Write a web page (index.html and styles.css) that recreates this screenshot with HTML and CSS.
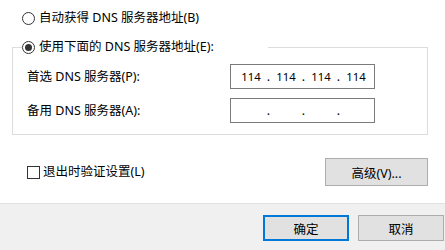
FILE: index.html
```html
<!DOCTYPE html>
<html lang="zh-CN">
<head>
<meta charset="utf-8">
<title>DNS</title>
<link rel="stylesheet" href="styles.css">
</head>
<body>
<div class="dialog">
  <div class="content">
    <div class="option">
      <span class="radio"></span>
      <span class="opt-text">自动获得 DNS 服务器地址(B)</span>
    </div>
    <fieldset class="group">
      <legend class="legend">
        <span class="radio checked"></span>
        <span class="opt-text">使用下面的 DNS 服务器地址(E):</span>
      </legend>
      <div class="fields">
        <span class="label">首选 DNS 服务器(P):</span>
        <div class="ip">
          <span class="seg">114</span><span class="dot">.</span><span class="seg">114</span><span class="dot">.</span><span class="seg">114</span><span class="dot">.</span><span class="seg">114</span>
        </div>
        <span class="label">备用 DNS 服务器(A):</span>
        <div class="ip">
          <span class="seg"></span><span class="dot">.</span><span class="seg"></span><span class="dot">.</span><span class="seg"></span><span class="dot">.</span><span class="seg"></span>
        </div>
      </div>
    </fieldset>
    <div class="bottom-row">
      <div class="check-wrap">
        <span class="checkbox"></span>
        <span class="opt-text">退出时验证设置(L)</span>
      </div>
      <button class="btn adv">高级(V)...</button>
    </div>
  </div>
  <div class="footer">
    <button class="btn ok">确定</button>
    <button class="btn">取消</button>
  </div>
</div>
</body>
</html>
```
FILE: styles.css
```css
html, body {
  margin: 0;
  padding: 0;
  background: #ffffff;
}
body {
  font-family: "Noto Sans", "Noto Sans CJK SC", sans-serif;
  font-size: 12.5px;
  color: #000;
  width: 445px;
  height: 250px;
  overflow: hidden;
}
.dialog {
  display: flex;
  flex-direction: column;
  height: 250px;
}
.content {
  height: 203px;
  box-sizing: border-box;
  padding: 10px 0 0 12px;
}
.option {
  display: flex;
  align-items: center;
  height: 16px;
  margin-left: 10px;
}
.radio {
  width: 13px;
  height: 13px;
  box-sizing: border-box;
  border: 1px solid #333;
  border-radius: 50%;
  background: #fff;
  display: inline-flex;
  align-items: center;
  justify-content: center;
  flex: none;
}
.radio.checked::after {
  content: "";
  width: 7px;
  height: 7px;
  border-radius: 50%;
  background: #333;
}
.opt-text {
  margin-left: 4px;
  line-height: 16px;
  white-space: nowrap;
}
.group {
  margin: 13px 0 0 0;
  width: 416px;
  box-sizing: border-box;
  border: 1px solid #dcdcdc;
  padding: 0;
  min-width: 0;
}
.legend {
  display: flex;
  align-items: center;
  height: 16px;
  width: 246px;
  padding: 0;
  margin-left: 9px;
  background: #fff;
}
.fields {
  display: grid;
  grid-template-columns: 203px 145px;
  grid-auto-rows: 25px;
  row-gap: 9px;
  align-items: center;
  padding: 9px 0 11px 14px;
}
.label {
  white-space: nowrap;
  line-height: 16px;
}
.ip {
  height: 25px;
  box-sizing: border-box;
  border: 1px solid #7a7a7a;
  display: flex;
  align-items: center;
  padding: 0 0 0 9px;
}
.seg {
  flex: none;
  width: 22px;
  text-align: center;
  font-size: 11.3px;
}
.dot {
  flex: none;
  width: 13px;
  text-align: center;
}
.bottom-row {
  display: flex;
  align-items: center;
  justify-content: space-between;
  width: 416px;
  margin-top: 23px;
  box-sizing: border-box;
  padding-left: 15px;
}
.check-wrap {
  display: flex;
  align-items: center;
}
.checkbox {
  width: 13px;
  height: 13px;
  box-sizing: border-box;
  border: 1px solid #333;
  background: #fff;
  flex: none;
}
.check-wrap .opt-text {
  margin-left: 3px;
}
.btn {
  font-family: inherit;
  font-size: 12.5px;
  color: #000;
  background: #e1e1e1;
  border: 1px solid #adadad;
  padding: 0;
  box-sizing: border-box;
  margin: 0;
}
.adv {
  width: 103px;
  height: 28px;
}
.footer {
  flex: 1;
  background: #f0f0f0;
  border-top: 1px solid #dfdfdf;
  display: flex;
  justify-content: flex-end;
  align-items: flex-start;
  gap: 9px;
  padding: 11px 1px 0 0;
}
.footer .btn {
  width: 86px;
  height: 26px;
}
.footer .ok {
  border: 2px solid #0078d7;
}
```
